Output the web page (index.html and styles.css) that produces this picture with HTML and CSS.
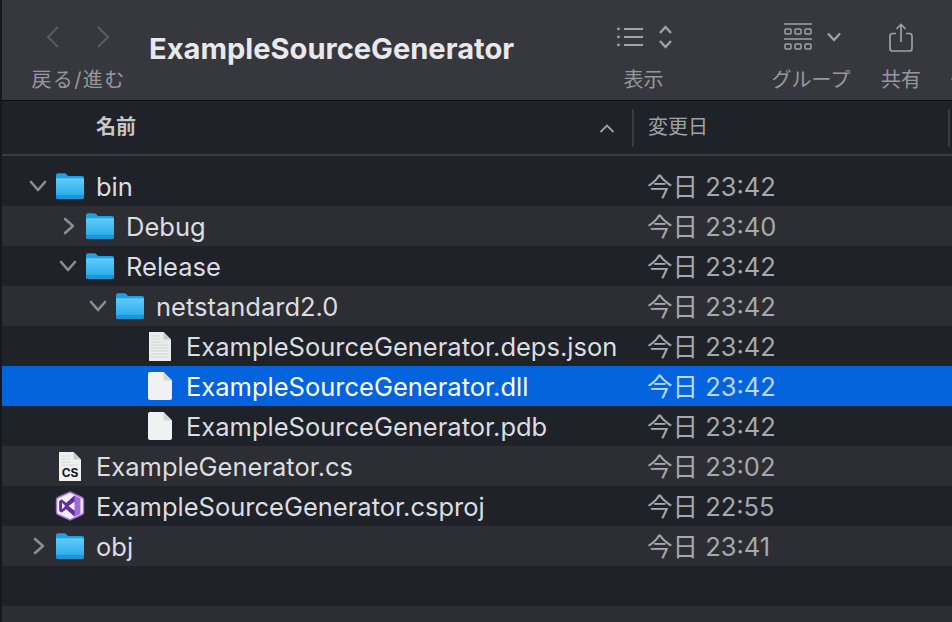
FILE: index.html
```html
<!DOCTYPE html>
<html lang="ja">
<head>
<meta charset="utf-8">
<title>ExampleSourceGenerator</title>
<link rel="stylesheet" href="styles.css">
</head>
<body>
<svg class="defs" aria-hidden="true">
  <defs>
    <linearGradient id="fg" x1="0" y1="0" x2="0" y2="1">
      <stop offset="0" stop-color="#5fcdf8"/>
      <stop offset="1" stop-color="#2fabee"/>
    </linearGradient>
    <symbol id="folder" viewBox="0 0 28 26">
      <path d="M0 2.2C0 1 .8.2 2 .2h6.2c.9 0 1.400.3 2 .9L12 3h14c1.200 0 2 .8 2 2v19c0 1.200-.8 2-2 2H2c-1.200 0-2-.8-2-2z" fill="#1f9fe6"/>
      <path d="M0 6.500c0-.8.500-1.300 1.300-1.300h25.400c.8 0 1.300.5 1.300 1.300V22H0z" fill="url(#fg)"/>
      <path d="M0 22h28v2c0 1.200-.8 2-2 2H2c-1.200 0-2-.8-2-2z" fill="#1e93dc"/>
    </symbol>
    <symbol id="chev-right" viewBox="0 0 14 18"><path d="M3 2l8 7-8 7" fill="none" stroke="currentColor" stroke-width="2.600" stroke-linecap="round" stroke-linejoin="round"/></symbol>
    <symbol id="chev-down" viewBox="0 0 18 14"><path d="M2 3l7 8 7-8" fill="none" stroke="currentColor" stroke-width="2.600" stroke-linecap="round" stroke-linejoin="round"/></symbol>
    <symbol id="blank-doc" viewBox="0 0 24 28">
      <path d="M2 0h13.500L24 8.500V26c0 1.200-.8 2-2 2H2c-1.200 0-2-.8-2-2V2C0 .8.800 0 2 0z" fill="#f1f1f3"/>
      <path d="M15.500 0L24 8.500h-6.500c-1.200 0-2-.8-2-2z" fill="#d4d5d8"/>
    </symbol>
  </defs>
</svg>

<main class="window">
  <header class="toolbar">
    <div class="tool nav">
      <div class="tool-icons nav-icons">
        <svg class="nav-arrow" viewBox="0 0 16 24"><path d="M13 2L3 12l10 10"/></svg>
        <svg class="nav-arrow" viewBox="0 0 16 24"><path d="M3 2l10 10L3 22"/></svg>
      </div>
      <span class="tool-label">戻る/進む</span>
    </div>
    <h1 class="title">ExampleSourceGenerator</h1>
    <div class="tool view">
      <div class="tool-icons view-icons">
        <svg class="icon-list" viewBox="0 0 27 20">
          <circle cx="1.500" cy="2" r="1.400"/><circle cx="1.500" cy="10" r="1.400"/><circle cx="1.500" cy="18" r="1.400"/>
          <path d="M7 2h19M7 10h19M7 18h19"/>
        </svg>
        <svg class="icon-updown" viewBox="0 0 15 24"><path d="M2 8l5.500-6L13 8M2 16l5.500 6 5.500-6"/></svg>
      </div>
      <span class="tool-label">表示</span>
    </div>
    <div class="tool group">
      <div class="tool-icons group-icons">
        <svg class="icon-group" viewBox="0 0 28 28">
          <path d="M0 1h28M0 16h28"/>
          <rect x="1" y="6" width="6" height="5" rx="1"/><rect x="11" y="6" width="6" height="5" rx="1"/><rect x="21" y="6" width="6" height="5" rx="1"/>
          <rect x="1" y="21" width="6" height="5" rx="1"/><rect x="11" y="21" width="6" height="5" rx="1"/><rect x="21" y="21" width="6" height="5" rx="1"/>
        </svg>
        <svg class="icon-down" viewBox="0 0 16 12"><path d="M2 2.500l6 6.500 6-6.500"/></svg>
      </div>
      <span class="tool-label">グループ</span>
    </div>
    <div class="tool share">
      <div class="tool-icons">
        <svg class="icon-share" viewBox="0 0 24 29">
          <path d="M7 10.500H3.500c-1.500 0-2.500 1-2.500 2.500v12.500C1 27 2 28 3.500 28h17c1.500 0 2.500-1 2.500-2.500V13c0-1.500-1-2.500-2.500-2.500H17"/>
          <path d="M12 19V1.500M7.500 6L12 1.500 16.500 6"/>
        </svg>
      </div>
      <span class="tool-label">共有</span>
    </div>
    <div class="tool tags"><div class="tool-icons"></div><span class="tool-label">タグ</span></div>
  </header>

  <div class="columns">
    <div class="col-name">
      <span class="col-text">名前</span>
      <svg class="sort" viewBox="0 0 16 9"><path d="M1.500 8L8 1.500 14.500 8"/></svg>
    </div>
    <div class="col-date"><span class="col-text">変更日</span></div>
  </div>

  <div class="list">
    <div class="row-spacer"></div>
    <div class="row d0">
      <svg class="disc down"><use href="#chev-down"/></svg>
      <svg class="ic folder"><use href="#folder"/></svg>
      <span class="name">bin</span><span class="date">今日 23:42</span>
    </div>
    <div class="row alt d1">
      <svg class="disc right"><use href="#chev-right"/></svg>
      <svg class="ic folder"><use href="#folder"/></svg>
      <span class="name">Debug</span><span class="date">今日 23:40</span>
    </div>
    <div class="row d1">
      <svg class="disc down"><use href="#chev-down"/></svg>
      <svg class="ic folder"><use href="#folder"/></svg>
      <span class="name">Release</span><span class="date">今日 23:42</span>
    </div>
    <div class="row alt d2">
      <svg class="disc down"><use href="#chev-down"/></svg>
      <svg class="ic folder"><use href="#folder"/></svg>
      <span class="name">netstandard2.0</span><span class="date">今日 23:42</span>
    </div>
    <div class="row d3">
      <span class="disc"></span>
      <svg class="ic textdoc" viewBox="0 0 22 29">
        <path d="M0 0h14.500L22 7.500V29H0z" fill="#ebebec"/>
        <path d="M14.500 0L22 7.500h-7.500z" fill="#c8c9cb"/>
        <path d="M2 4h9M2 7h9M2 10h10M2 13h17M2 16h17M2 19h17M2 22h17M2 25h17" stroke="#d6d7d8" stroke-width="1.200"/>
      </svg>
      <span class="name">ExampleSourceGenerator.deps.json</span><span class="date">今日 23:42</span>
    </div>
    <div class="row selected d3">
      <span class="disc"></span>
      <svg class="ic doc"><use href="#blank-doc"/></svg>
      <span class="name">ExampleSourceGenerator.dll</span><span class="date">今日 23:42</span>
    </div>
    <div class="row d3">
      <span class="disc"></span>
      <svg class="ic doc"><use href="#blank-doc"/></svg>
      <span class="name">ExampleSourceGenerator.pdb</span><span class="date">今日 23:42</span>
    </div>
    <div class="row alt d0">
      <span class="disc"></span>
      <span class="ic csdoc">
        <svg class="csdoc-bg" viewBox="0 0 22 29">
          <path d="M0 0h14.500L22 7.500V29H0z" fill="#f0f0f1"/>
          <path d="M14.500 0L22 7.500h-7.500z" fill="#c8c9cb"/>
          <path d="M2 4h9M2 7h9M2 10h10M2 13h17" stroke="#d6d7d8" stroke-width="1.200"/>
        </svg>
        <span class="cs">CS</span>
      </span>
      <span class="name">ExampleGenerator.cs</span><span class="date">今日 23:02</span>
    </div>
    <div class="row d0">
      <span class="disc"></span>
      <svg class="ic vs" viewBox="0 0 28 30">
        <path d="M14 1l12 5.500c1 .5 1.500 1.200 1.500 2.300v12.400c0 1.100-.5 1.800-1.500 2.300L14 29 2 23.500C1 23 .5 22.300.5 21.200V8.800C.5 7.700 1 7 2 6.500z" fill="#f4eefb" stroke="#9f73da" stroke-width="1.400"/>
        <path d="M18.500 4.500l6 2.800v15.400l-6 2.800-8.300-7.500-4.400 3.400-2.500-1.300V9.900l2.500-1.300 4.400 3.400z" fill="#9b6cd6"/>
        <path d="M18.500 10.200v9.600L12.400 15zM6 11.500L9.200 15 6 18.500z" fill="#f4eefb"/>
        <path d="M18.500 4.500v6L12.400 15l6.100 4.800v5.700l-8.300-7.500-4.400 3.400-2.500-1.300V9.900l2.500-1.300 4.400 3.400z" fill="#5f2f9c"/>
        <path d="M6 11.500L9.200 15 6 18.500z" fill="#f4eefb"/>
      </svg>
      <span class="name">ExampleSourceGenerator.csproj</span><span class="date">今日 22:55</span>
    </div>
    <div class="row alt d0">
      <svg class="disc right"><use href="#chev-right"/></svg>
      <svg class="ic folder"><use href="#folder"/></svg>
      <span class="name">obj</span><span class="date">今日 23:41</span>
    </div>
    <div class="row"></div>
    <div class="row alt"></div>
  </div>
</main>
</body>
</html>
```

FILE: styles.css
```css
* { box-sizing: border-box; }
html, body { margin: 0; height: 100%; }
body {
  background: #1f2228;
  font-family: Inter, "Noto Sans CJK JP", sans-serif;
  overflow: hidden;
}
.defs { display: block; width: 0; height: 0; }

.window {
  width: 952px;
  height: 622px;
  overflow: hidden;
  border-left: 2px solid #17181b;
}

/* toolbar */
.toolbar {
  height: 101px;
  display: flex;
  padding-left: 30px;
  background: #37383d;
  border-bottom: 1px solid #0d0e10;
  overflow: hidden;
}
.tool {
  flex: none;
  display: flex;
  flex-direction: column;
  align-items: center;
}
.tool-icons {
  height: 68px;
  display: flex;
  align-items: center;
  padding-top: 6px;
}
.tool-label {
  font-size: 20px;
  line-height: 24px;
  color: #97989c;
  white-space: nowrap;
}
.nav { width: 93px; }
.nav .tool-label { letter-spacing: 1.400px; }
.nav-icons { gap: 34px; padding-right: 2px; }
.nav-arrow {
  width: 16px;
  height: 24px;
  fill: none;
  stroke: #5c5d61;
  stroke-width: 2;
}
.title {
  flex: none;
  width: 365px;
  margin: 28px 0 0 24px;
  font-size: 29.100px;
  line-height: 42px;
  font-weight: 700;
  color: #e9e9eb;
  white-space: nowrap;
}
.view { width: 55px; margin-left: 103px; }
.view .tool-label { margin-left: -2px; }
.view-icons { gap: 14px; }
.icon-list { width: 27px; height: 20px; fill: #a0a1a5; stroke: #a0a1a5; stroke-width: 1.800; }
.icon-list circle { stroke: none; }
.icon-updown { width: 15px; height: 24px; fill: none; stroke: #a0a1a5; stroke-width: 2.400; }
.group { width: 80px; margin-left: 99px; }
.group-icons { gap: 14px; padding-left: 3px; padding-bottom: 1px; }
.icon-group { width: 28px; height: 28px; fill: none; stroke: #a0a1a5; stroke-width: 1.500; }
.icon-down { width: 16px; height: 12px; fill: none; stroke: #a0a1a5; stroke-width: 2.400; }
.share { width: 40px; margin-left: 30px; }
.icon-share { width: 24px; height: 29px; fill: none; stroke: #a0a1a5; stroke-width: 1.700; }
.tags { width: 40px; margin-left: 28px; align-items: flex-start; }

/* column headers */
.columns {
  height: 55px;
  display: flex;
  align-items: center;
  background: #1f2228;
  border-bottom: 2px solid #3a3c41;
}
.col-name {
  width: 632px;
  height: 38px;
  display: flex;
  align-items: center;
  justify-content: space-between;
  padding: 0 17px 0 94px;
  border-right: 2px solid #3a3c41;
  font-size: 20px;
  font-weight: 700;
  color: #c6c7ca;
}
.col-text { margin-top: -4px; }
.sort { width: 16px; height: 9px; margin-top: 2px; fill: none; stroke: #a0a1a5; stroke-width: 1.800; }
.col-date {
  flex: 1;
  height: 38px;
  display: flex;
  align-items: center;
  padding-left: 14px;
  border-right: 2px solid #3a3c41;
  margin-right: 2px;
  font-size: 20px;
  color: #a0a1a5;
}

/* rows */
.row-spacer { height: 10px; }
.row {
  height: 40px;
  display: flex;
  align-items: center;
  color: #dcdde0;
  font-size: 25.500px;
  white-space: nowrap;
}
.alt { background: #2c2e33; }
.selected { background: #0263dc; color: #fff; }
.d0 { padding-left: 24px; }
.d1 { padding-left: 54px; }
.d2 { padding-left: 84px; }
.d3 { padding-left: 114px; }

.disc { flex: none; width: 24px; color: #8c8d90; }
svg.disc.down { height: 14px; width: 24px; }
svg.disc.right { height: 18px; width: 24px; transform: translateX(1px); }
.ic { flex: none; width: 32px; margin-left: 4px; }
.folder { height: 26px; }
.doc { height: 28px; }
.textdoc { height: 29px; }
.csdoc { position: relative; display: block; height: 29px; }
.csdoc-bg { position: absolute; left: 5px; top: 0; width: 22px; height: 29px; }
.cs {
  position: absolute;
  left: 5px;
  width: 22px;
  bottom: 2px;
  text-align: center;
  font-size: 12px;
  line-height: 12px;
  font-weight: 700;
  color: #17181b;
}
.vs { height: 30px; }
.name { flex: 1; margin-left: 10px; }
.date { flex: none; width: 305px; line-height: 30px; margin-top: 2px; color: #a6a8ab; }
.selected .date { color: #bcd8ff; }
```
